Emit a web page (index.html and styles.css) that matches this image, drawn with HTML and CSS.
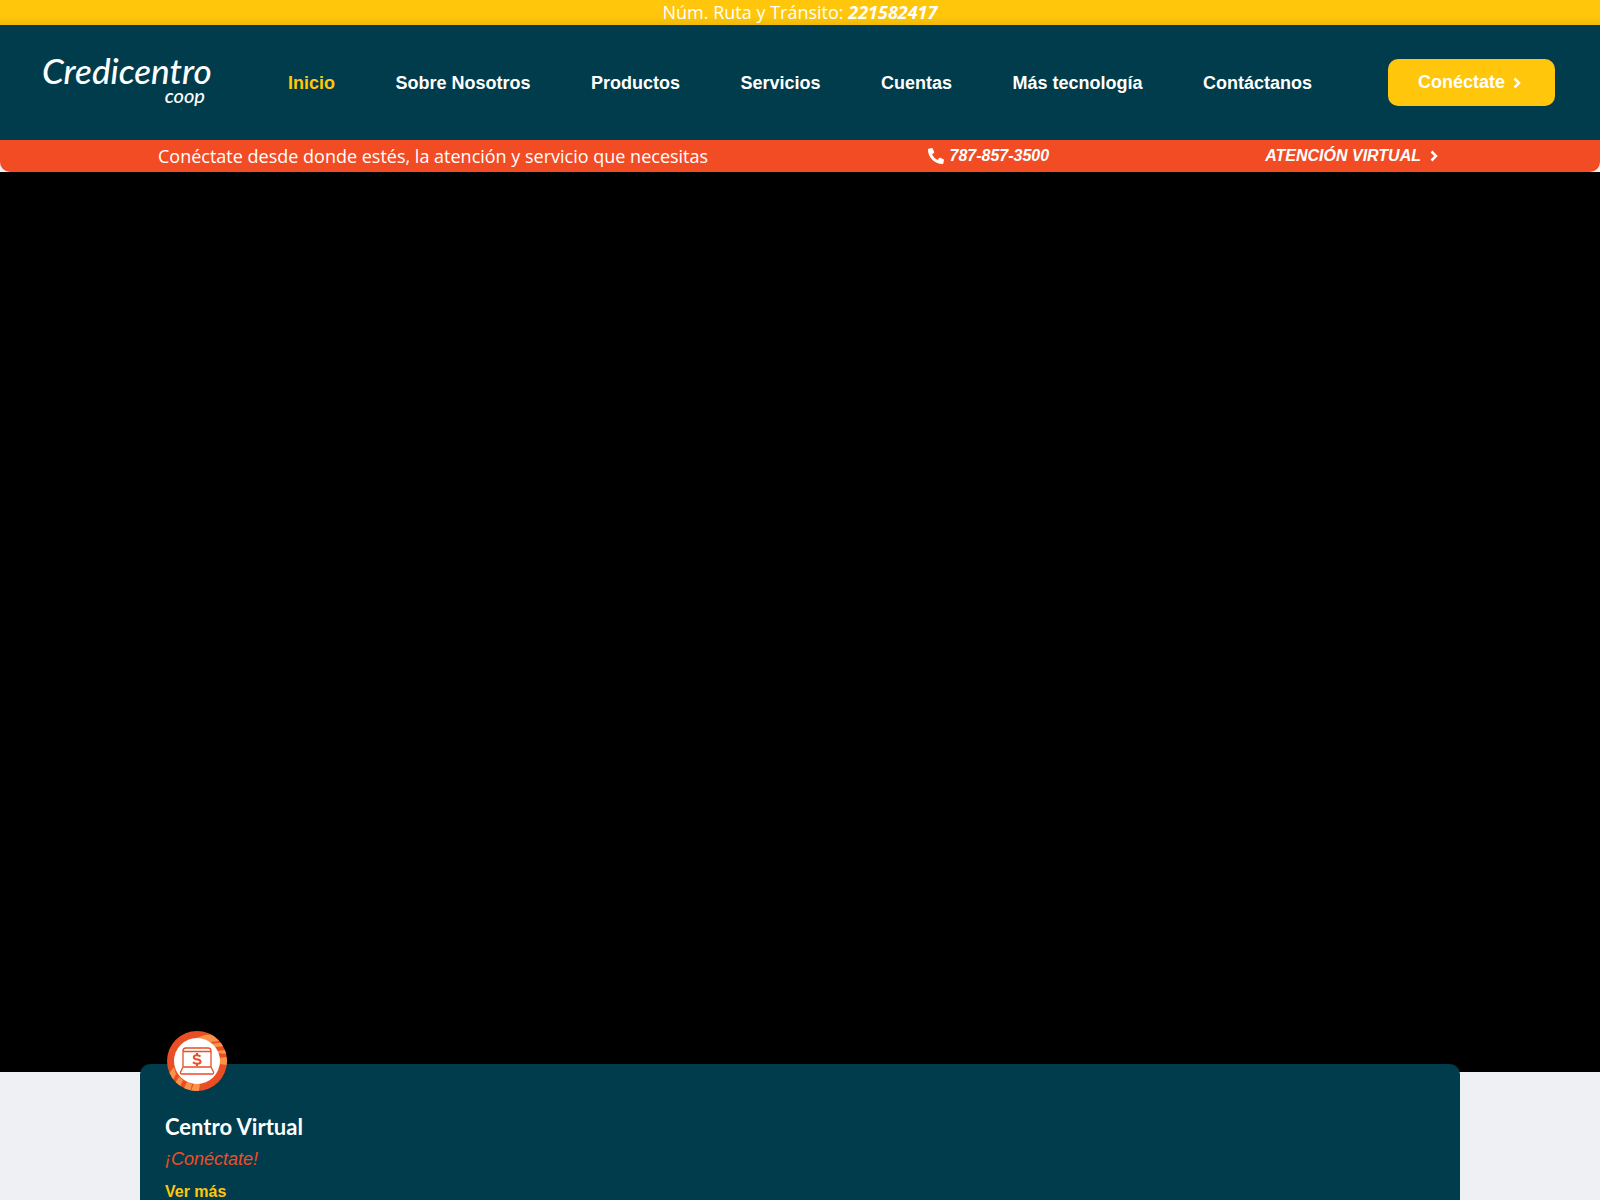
FILE: index.html
```html
<!DOCTYPE html>
<html lang="es">
<head>
<meta charset="utf-8">
<meta name="viewport" content="width=device-width, initial-scale=1">
<title>Credicentro Coop</title>
<link rel="stylesheet" href="styles.css">
</head>
<body>
<div class="routing">Núm. Ruta y Tránsito: <strong>221582417</strong></div>
<header class="header">
  <a class="logo" href="#"><span class="logo-name">Credicentro</span><span class="logo-sub">coop</span></a>
  <nav class="nav" aria-label="Principal">
    <a class="nav-link active" href="#">Inicio</a>
    <a class="nav-link" href="#">Sobre Nosotros</a>
    <a class="nav-link" href="#">Productos</a>
    <a class="nav-link" href="#">Servicios</a>
    <a class="nav-link" href="#">Cuentas</a>
    <a class="nav-link" href="#">Más tecnología</a>
    <a class="nav-link" href="#">Contáctanos</a>
  </nav>
  <button class="connect" type="button">Conéctate
    <svg class="chevron" viewBox="0 0 8 12" aria-hidden="true"><path d="M1.5 1.5 6 6 1.5 10.5"/></svg>
  </button>
</header>
<div class="contact">
  <span class="contact-message">Conéctate desde donde estés, la atención y servicio que necesitas</span>
  <a class="contact-link phone" href="tel:7878573500">
    <svg class="phone-icon" viewBox="0 0 512 512" aria-hidden="true"><path d="M150.300 14.600a24 24 0 0 0-27.300-14L19 24.600A24 24 0 0 0 0 48c0 256.500 207.900 464 464 464a24 24 0 0 0 23.400-18.600l24-104a24 24 0 0 0-14-27.500l-112-48a24 24 0 0 0-28 6.900l-49.600 60.600a371 371 0 0 1-177.200-177.200l60.600-49.600a24 24 0 0 0 6.900-28Z"/></svg>
    787-857-3500
  </a>
  <a class="contact-link virtual" href="#">ATENCIÓN VIRTUAL
    <svg class="chevron" viewBox="0 0 8 12" aria-hidden="true"><path d="M1.500 1.500 6 6 1.500 10.500"/></svg>
  </a>
</div>
<main class="main">
  <section class="hero" aria-label="Video"></section>
  <section class="card">
    <svg class="card-icon" viewBox="0 0 60 60" aria-hidden="true">
      <defs><clipPath id="disc"><circle cx="30" cy="30" r="30"/></clipPath></defs>
      <g clip-path="url(#disc)">
        <path fill="#e94e25" d="M0 0h60v60H0z"/>
        <path fill="#f9934a" d="M29 7 38 4 46 3 52 10 44 11 38 9ZM44 13l13-2 3 4-12 1ZM49 20l11-1v4l-10-1ZM52 27l8-1v8l-8-1ZM7 36l2 7-4 8-5-6ZM12 46l4 3-4 9-5-4ZM20 51l5 2-2 8-7-2ZM27 52h6l-1 8h-8Z"/>
      </g>
      <circle cx="30" cy="30" r="23" fill="#fff"/>
      <g fill="none" stroke="#e94e25" stroke-width="1.300" stroke-linejoin="round">
        <path d="M16 36V20q0-3 3-3h22q3 0 3 3v16M16 20.500h28M16 36h28l2.500 5q.5 2-1.500 2H15q-2 0-1.500-2Z"/>
        <path stroke-width="2" d="M33.500 25.500q-1.500-1.500-4-1.300c-3.500.2-3.500 3.500-.5 4l2 .4c3.500.7 3.500 4.100-.5 4.200q-3 .1-4.500-1.500M30 22v2.500M30 32v3"/>
      </g>
    </svg>
    <h2 class="card-title">Centro Virtual</h2>
    <p class="card-text">¡Conéctate!</p>
    <a class="card-link" href="#">Ver más</a>
  </section>
</main>
</body>
</html>
```

FILE: styles.css
```css
* {
  box-sizing: border-box;
}

body {
  display: flex;
  flex-direction: column;
  min-height: 100vh;
  margin: 0;
  background: #eff0f3;
  color: #fff;
  font: 16px/24px "Liberation Sans", Arial, sans-serif;
}

a {
  color: inherit;
  text-decoration: none;
}

.routing {
  height: 25px;
  background: linear-gradient(#ffc60b 16px, #eeb90a);
  font: 500 18px/25px "Open Sans", sans-serif;
  text-align: center;
}

.routing strong {
  font-style: italic;
  font-weight: 700;
}

.header {
  display: flex;
  align-items: center;
  min-height: 115px;
  padding: 0 45px 0 42px;
  background: #003c4b;
}

.logo {
  display: flex;
  flex-direction: column;
  width: 167px;
  padding-bottom: 6px;
  font-family: Lato, sans-serif;
  font-style: italic;
  font-weight: 500;
}

.logo-name {
  font-size: 35px;
  line-height: 30px;
}

.logo-sub {
  padding-right: 4px;
  font-size: 20px;
  line-height: 20px;
  text-align: right;
}

.nav {
  display: flex;
  flex: 1;
  justify-content: space-between;
  margin: 0 76px 0 79px;
}

.nav-link,
.connect {
  font-size: 18px;
  font-weight: 700;
}

.nav-link.active {
  color: #ffc60b;
}

.connect {
  display: flex;
  align-items: center;
  justify-content: center;
  gap: 8px;
  width: 167px;
  height: 47px;
  padding: 0 4px 0 0;
  border: 0;
  border-radius: 10px;
  background: #ffc60b;
  color: #fff;
  font-family: inherit;
}

.chevron {
  width: 8px;
  height: 12px;
  fill: none;
  stroke: currentColor;
  stroke-width: 2.500;
}

.contact {
  display: flex;
  align-items: center;
  min-height: 32px;
  padding: 0 162px 0 158px;
  border-radius: 0 0 10px 10px;
  background: #f24c24;
}

.contact-message {
  flex: 1;
  font: 500 18px/32px "Open Sans", sans-serif;
}

.contact-link {
  display: flex;
  align-items: center;
  font-style: italic;
  font-weight: 700;
}

.phone {
  gap: 6px;
}

.phone-icon {
  width: 16px;
  height: 16px;
  fill: currentColor;
}

.virtual {
  gap: 9px;
  margin-left: 216px;
}

.main {
  display: flex;
  flex: 1;
  flex-direction: column;
}

.hero {
  height: 75vh;
  background: #000;
}

.card {
  display: flex;
  flex: 1;
  flex-direction: column;
  align-items: flex-start;
  width: calc(100% - 280px);
  margin: -8px auto 0;
  padding: 0 25px;
  border-radius: 10px 10px 0 0;
  background: #003c4b;
}

.card-icon {
  width: 60px;
  height: 60px;
  margin: -33px 0 0 2px;
}

.card-title {
  margin: 20px 0 4px;
  font: 700 22px/32px Lato, sans-serif;
}

.card-text {
  margin: 0 0 12px;
  color: #f24c24;
  font-size: 18px;
  font-style: italic;
  line-height: 24px;
}

.card-link {
  color: #ffc60b;
  font-weight: 700;
  line-height: 18px;
}
```
